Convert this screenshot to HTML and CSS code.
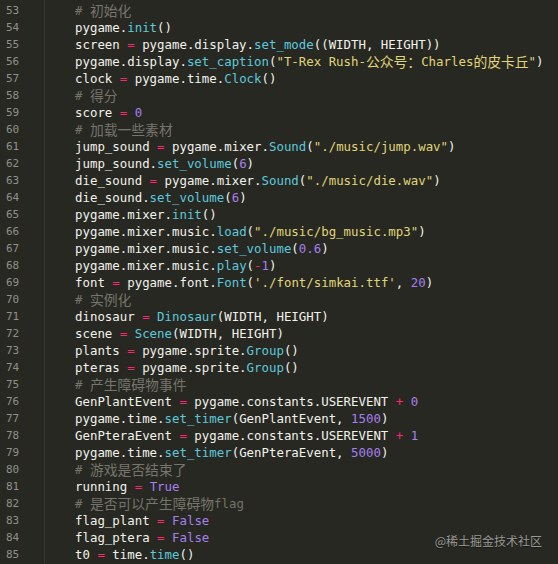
FILE: index.html
```html
<!DOCTYPE html>
<html lang="zh">
<head>
<meta charset="utf-8">
<link rel="stylesheet" href="styles.css">
</head>
<body>
<div class="editor">
  <div class="gutter">
    <div class="ln">53</div><div class="ln">54</div><div class="ln">55</div><div class="ln">56</div><div class="ln">57</div>
    <div class="ln">58</div><div class="ln">59</div><div class="ln">60</div><div class="ln">61</div><div class="ln">62</div>
    <div class="ln">63</div><div class="ln">64</div><div class="ln">65</div><div class="ln">66</div><div class="ln">67</div>
    <div class="ln">68</div><div class="ln">69</div><div class="ln">70</div><div class="ln">71</div><div class="ln">72</div>
    <div class="ln">73</div><div class="ln">74</div><div class="ln">75</div><div class="ln">76</div><div class="ln">77</div>
    <div class="ln">78</div><div class="ln">79</div><div class="ln">80</div><div class="ln">81</div><div class="ln">82</div>
    <div class="ln">83</div><div class="ln">84</div><div class="ln">85</div>
  </div>
  <div class="code">
    <div class="line"><span class="c"># <span class="cjk">初始化</span></span></div>
    <div class="line">pygame.<span class="f">init</span>()</div>
    <div class="line">screen <span class="o">=</span> pygame.display.<span class="f">set_mode</span>((WIDTH, HEIGHT))</div>
    <div class="line">pygame.display.<span class="f">set_caption</span>(<span class="s">"T-Rex Rush-<span class="cjk">公众号：</span>Charles<span class="cjk">的皮卡丘</span>"</span>)</div>
    <div class="line">clock <span class="o">=</span> pygame.time.<span class="f">Clock</span>()</div>
    <div class="line"><span class="c"># <span class="cjk">得分</span></span></div>
    <div class="line">score <span class="o">=</span> <span class="n">0</span></div>
    <div class="line"><span class="c"># <span class="cjk">加载一些素材</span></span></div>
    <div class="line">jump_sound <span class="o">=</span> pygame.mixer.<span class="f">Sound</span>(<span class="s">"./music/jump.wav"</span>)</div>
    <div class="line">jump_sound.<span class="f">set_volume</span>(<span class="n">6</span>)</div>
    <div class="line">die_sound <span class="o">=</span> pygame.mixer.<span class="f">Sound</span>(<span class="s">"./music/die.wav"</span>)</div>
    <div class="line">die_sound.<span class="f">set_volume</span>(<span class="n">6</span>)</div>
    <div class="line">pygame.mixer.<span class="f">init</span>()</div>
    <div class="line">pygame.mixer.music.<span class="f">load</span>(<span class="s">"./music/bg_music.mp3"</span>)</div>
    <div class="line">pygame.mixer.music.<span class="f">set_volume</span>(<span class="n">0.6</span>)</div>
    <div class="line">pygame.mixer.music.<span class="f">play</span>(<span class="o">-</span><span class="n">1</span>)</div>
    <div class="line">font <span class="o">=</span> pygame.font.<span class="f">Font</span>(<span class="s">'./font/simkai.ttf'</span>, <span class="n">20</span>)</div>
    <div class="line"><span class="c"># <span class="cjk">实例化</span></span></div>
    <div class="line">dinosaur <span class="o">=</span> <span class="f">Dinosaur</span>(WIDTH, HEIGHT)</div>
    <div class="line">scene <span class="o">=</span> <span class="f">Scene</span>(WIDTH, HEIGHT)</div>
    <div class="line">plants <span class="o">=</span> pygame.sprite.<span class="f">Group</span>()</div>
    <div class="line">pteras <span class="o">=</span> pygame.sprite.<span class="f">Group</span>()</div>
    <div class="line"><span class="c"># <span class="cjk">产生障碍物事件</span></span></div>
    <div class="line">GenPlantEvent <span class="o">=</span> pygame.constants.USEREVENT <span class="o">+</span> <span class="n">0</span></div>
    <div class="line">pygame.time.<span class="f">set_timer</span>(GenPlantEvent, <span class="n">1500</span>)</div>
    <div class="line">GenPteraEvent <span class="o">=</span> pygame.constants.USEREVENT <span class="o">+</span> <span class="n">1</span></div>
    <div class="line">pygame.time.<span class="f">set_timer</span>(GenPteraEvent, <span class="n">5000</span>)</div>
    <div class="line"><span class="c"># <span class="cjk">游戏是否结束了</span></span></div>
    <div class="line">running <span class="o">=</span> <span class="n">True</span></div>
    <div class="line"><span class="c"># <span class="cjk">是否可以产生障碍物</span>flag</span></div>
    <div class="line">flag_plant <span class="o">=</span> <span class="n">False</span></div>
    <div class="line">flag_ptera <span class="o">=</span> <span class="n">False</span></div>
    <div class="line">t0 <span class="o">=</span> time.<span class="f">time</span>()</div>
  </div>
</div>
<div class="watermark">@稀土掘金技术社区</div>
</body>
</html>
```
FILE: styles.css
```css
html, body {
  margin: 0;
  padding: 0;
  background: #272822;
  height: 100%;
  overflow: hidden;
}
.editor {
  display: flex;
  height: 564px;
}
.gutter {
  width: 45px;
  border-right: 1px solid #36372f;
  padding: 2px 0 0 6px;
  box-sizing: border-box;
}
.ln {
  height: 17px;
  line-height: 17px;
  font-family: "DejaVu Sans Mono", "Liberation Mono", monospace;
  font-size: 11px;
  color: #8f908a;
}
.code {
  padding: 2px 0 0 30px;
  font-family: "DejaVu Sans Mono", "Liberation Mono", monospace;
  font-size: 12.4px;
  color: #f2f2ec;
}
.line {
  height: 17px;
  line-height: 17px;
  white-space: pre;
}
.cjk {
  display: inline-block;
  height: 17px;
  line-height: 17px;
  vertical-align: top;
  font-family: "Noto Sans CJK SC", sans-serif;
  font-size: 13.8px;
}
.c { color: #75756b; }
.o { color: #f92672; }
.f { color: #5ec8dc; }
.s { color: #e0d679; }
.n { color: #a67ff0; }
.watermark {
  position: absolute;
  right: 16px;
  bottom: 15px;
  font-family: "Noto Sans CJK SC", sans-serif;
  font-size: 12px;
  color: #9a9a95;
  text-shadow: 0 1px 1px rgba(0,0,0,0.4);
}
```
